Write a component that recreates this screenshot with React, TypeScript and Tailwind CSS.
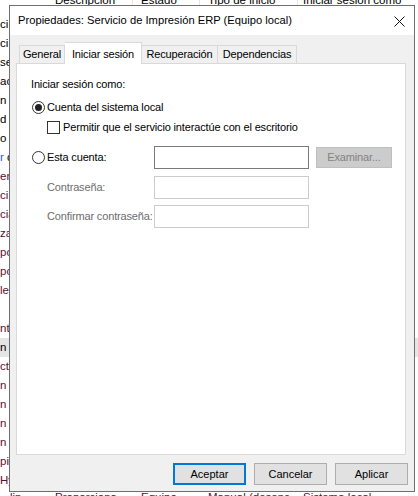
import React from "react";

const MAROON = "text-[#5a1033]";

const rows: { t: string; c?: string; sel?: boolean }[] = [
  { t: "ci" },
  { t: "ci" },
  { t: "se" },
  { t: "ac" },
  { t: "n a" },
  { t: "d" },
  { t: "o" },
  { t: "r d", c: "blue" },
  { t: "en", c: MAROON },
  { t: "ci", c: MAROON },
  { t: "cia", c: MAROON },
  { t: "za", c: MAROON },
  { t: "pc", c: MAROON },
  { t: "pc", c: MAROON },
  { t: "le", c: MAROON },
  { t: "" },
  { t: "nta", c: MAROON },
  { t: "n E", sel: true },
  { t: "ct", c: MAROON },
  { t: "n", c: MAROON },
  { t: "n", c: MAROON },
  { t: "n", c: MAROON },
  { t: "n", c: MAROON },
  { t: "pic", c: MAROON },
  { t: "Hy", c: MAROON },
];

function Radio({ checked }: { checked?: boolean }) {
  return (
    <span className="flex h-[13px] w-[13px] shrink-0 items-center justify-center rounded-full border border-[#333333] bg-white">
      {checked && <span className="h-[7px] w-[7px] rounded-full bg-[#222222]" />}
    </span>
  );
}

function ServiceList() {
  return (
    <div className="mt-[-13px] text-[11.5px] text-black">
      {/* column headers, mostly hidden above the window */}
      <div className="flex h-[28px] items-center">
        <div className="h-full w-[49px]" />
        <div className="flex h-full w-[84px] items-center border-r border-[#e5e5e5] pl-[6px]">Descripción</div>
        <div className="flex h-full w-[67px] items-center border-r border-[#e5e5e5] pl-[8px]">Estado</div>
        <div className="flex h-full w-[98px] items-center border-r border-[#e5e5e5] pl-[8px]">Tipo de inicio</div>
        <div className="flex h-full items-center pl-[5px] whitespace-nowrap">Iniciar sesión como</div>
      </div>

      {rows.map((r, i) => (
        <div
          key={i}
          className={`flex h-[19px] items-center whitespace-nowrap ${r.sel ? "bg-[#e5e5e5]" : ""} ${
            r.c && r.c !== "blue" ? r.c : ""
          }`}
        >
          {r.c === "blue" ? (
            <span>
              <span className="text-[#1a5fd0]">r</span> d
            </span>
          ) : (
            <span>{r.t}</span>
          )}
        </div>
      ))}

      {/* last row, only its top shows under the dialog */}
      <div className={`mt-[-2px] flex h-[19px] items-center whitespace-nowrap ${MAROON}`}>
        <div className="w-[49px] overflow-hidden pl-[10px]">lin</div>
        <div className="w-[84px] overflow-hidden pl-[6px]">Proporciona</div>
        <div className="w-[67px] overflow-hidden pl-[8px]">Equipo</div>
        <div className="w-[98px] overflow-hidden pl-[8px]">Manual (desenc</div>
        <div className="pl-[5px]">Sistema local</div>
      </div>
    </div>
  );
}

export default function App() {
  return (
    <div className="relative h-[496px] w-[418px] overflow-hidden bg-white font-['Liberation_Sans',Arial,sans-serif]">
      <ServiceList />

      {/* Properties dialog */}
      <div className="absolute left-[9px] top-[5px] flex h-[487px] w-[406px] flex-col border border-[#6f6f6f] bg-[#f0f0f0] text-[11px] text-black">
        {/* Title bar */}
        <div className="flex h-[29px] shrink-0 items-center justify-between bg-white pl-[8px] pr-[9px]">
          <span className="text-[11.2px]">Propiedades: Servicio de Impresión ERP (Equipo local)</span>
          <svg width="11" height="11" viewBox="0 0 11 11" className="mt-[1px]">
            <path d="M0.5 0.5 L10.5 10.5 M10.5 0.5 L0.5 10.5" stroke="#111" strokeWidth="1" />
          </svg>
        </div>

        {/* Tabs */}
        <div className="flex h-[28px] shrink-0 items-end pl-[9px] tracking-[-0.15px]">
          <div className="flex h-[18px] w-[46px] items-center justify-center border-t border-r border-l border-[#d9d9d9] bg-[#f0f0f0]">
            General
          </div>
          <div className="relative z-10 -mb-px flex h-[22px] w-[77px] items-start justify-center border-t border-r border-[#d9d9d9] bg-white pt-[3px]">
            Iniciar sesión
          </div>
          <div className="flex h-[18px] w-[76px] items-center justify-center border-t border-r border-[#d9d9d9] bg-[#f0f0f0]">
            Recuperación
          </div>
          <div className="flex h-[18px] w-[79px] items-center justify-center border-t border-r border-[#d9d9d9] bg-[#f0f0f0]">
            Dependencias
          </div>
        </div>

        {/* Tab panel */}
        <div className="ml-[6px] flex h-[392px] w-[390px] shrink-0 flex-col border border-[#d9d9d9] bg-white pt-[13px] tracking-[-0.15px]">
          <div className="flex h-[14px] items-center pl-[14px]">Iniciar sesión como:</div>

          <div className="mt-[9px] flex h-[14px] items-center gap-[2px] pl-[15px]">
            <Radio checked />
            <span>Cuenta del sistema local</span>
          </div>

          <div className="mt-[6px] flex h-[14px] items-center gap-[3px] pl-[30px]">
            <span className="h-[13px] w-[13px] shrink-0 border border-[#333333] bg-white" />
            <span>Permitir que el servicio interactúe con el escritorio</span>
          </div>

          <div className="mt-[12px] flex h-[23px] items-center">
            <div className="flex w-[137px] items-center gap-[2px] pl-[15px]">
              <Radio />
              <span>Esta cuenta:</span>
            </div>
            <div className="h-[23px] w-[155px] border border-[#7a7a7a] bg-white" />
            <div className="ml-[7px] flex h-[21px] w-[76px] items-center justify-center border border-[#bfbfbf] bg-[#cccccc] text-[#838383]">
              Examinar...
            </div>
          </div>

          <div className="mt-[7px] flex h-[23px] items-center">
            <div className="w-[137px] pl-[30px] text-[#6d6d6d]">Contraseña:</div>
            <div className="h-[23px] w-[155px] border border-[#cccccc] bg-white" />
          </div>

          <div className="mt-[6px] flex h-[23px] items-center">
            <div className="w-[137px] pl-[30px] text-[#6d6d6d]">Confirmar contraseña:</div>
            <div className="h-[23px] w-[155px] border border-[#cccccc] bg-white" />
          </div>
        </div>

        {/* Buttons */}
        <div className="mt-[8px] flex justify-end gap-[8px] pr-[6px]">
          <button className="flex h-[22px] w-[73px] items-center justify-center border-2 border-[#0078d7] bg-[#e1e1e1]">
            Aceptar
          </button>
          <button className="flex h-[22px] w-[73px] items-center justify-center border border-[#adadad] bg-[#e1e1e1]">
            Cancelar
          </button>
          <button className="flex h-[22px] w-[73px] items-center justify-center border border-[#adadad] bg-[#e1e1e1]">
            Aplicar
          </button>
        </div>
      </div>
    </div>
  );
}
